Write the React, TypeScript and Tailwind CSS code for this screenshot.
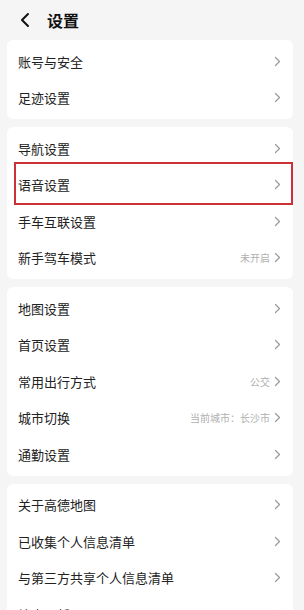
import React from 'react';

type Item = { label: string; value?: string; highlight?: boolean };

const groups: Item[][] = [
  [{ label: '账号与安全' }, { label: '足迹设置' }],
  [
    { label: '导航设置' },
    { label: '语音设置', highlight: true },
    { label: '手车互联设置' },
    { label: '新手驾车模式', value: '未开启' },
  ],
  [
    { label: '地图设置' },
    { label: '首页设置' },
    { label: '常用出行方式', value: '公交' },
    { label: '城市切换', value: '当前城市：长沙市' },
    { label: '通勤设置' },
  ],
  [
    { label: '关于高德地图' },
    { label: '已收集个人信息清单' },
    { label: '与第三方共享个人信息清单' },
    { label: '检查更新' },
  ],
];

const Chevron = () => (
  <svg width="7" height="11" viewBox="0 0 7 11" className="shrink-0">
    <path d="M1.5 1.5 L5.5 5.5 L1.5 9.5" fill="none" stroke="#9a9a9a" strokeWidth="1.2" strokeLinecap="round" strokeLinejoin="round" />
  </svg>
);

const Row: React.FC<{ item: Item }> = ({ item }) => (
  <div className="relative flex h-[36.5px] items-center justify-between pl-[11px] pr-[12px]">
    <span className="text-[13px] text-[#222]">{item.label}</span>
    <div className="flex items-center gap-[4px]">
      {item.value && <span className="text-[10px] text-[#b0b0b0]">{item.value}</span>}
      <Chevron />
    </div>
    {item.highlight && (
      <div className="pointer-events-none absolute left-[7px] right-0 -top-[5px] -bottom-[2px] border-2 border-[#cc3138]" />
    )}
  </div>
);

export default function App() {
  return (
    <div
      className="h-[610px] w-[304px] overflow-hidden bg-[#f5f5f5]"
      style={{ fontFamily: '"Noto Sans CJK SC", "Noto Sans", sans-serif' }}
    >
      <header className="flex h-[40px] items-center pl-[19px]">
        <svg width="12" height="16" viewBox="0 0 12 16">
          <path d="M9 2 L3 8 L9 14" fill="none" stroke="#111" strokeWidth="2" strokeLinecap="round" strokeLinejoin="round" />
        </svg>
        <h1 className="ml-[16px] text-[16px] font-bold text-[#111]">设置</h1>
      </header>
      <div className="flex flex-col gap-[8px] pl-[7px] pr-[11px]">
        {groups.map((g, i) => (
          <div key={i} className="rounded-[6px] bg-white py-[3px]">
            {g.map((item) => (
              <Row key={item.label} item={item} />
            ))}
          </div>
        ))}
      </div>
    </div>
  );
}
